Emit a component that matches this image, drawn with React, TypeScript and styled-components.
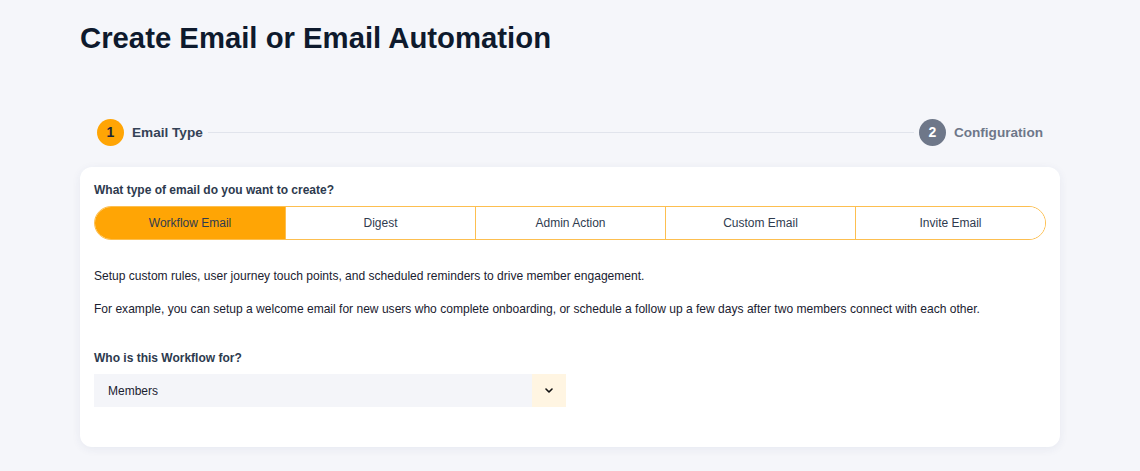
import React, { useState } from "react";
import styled, { createGlobalStyle } from "styled-components";

const GlobalStyle = createGlobalStyle`
  html, body { margin: 0; padding: 0; background: #f5f6fa; }
  body { font-family: "Liberation Sans", Arial, Helvetica, sans-serif; -webkit-font-smoothing: antialiased; }
  * { box-sizing: border-box; }
`;

const Page = styled.div`
  padding: 20px 80px 24px;
  width: 1140px;
`;

const Title = styled.h1`
  margin: 0;
  font-size: 29.3px;
  line-height: 36px;
  font-weight: 700;
  color: #0e1a2d;
`;

const Stepper = styled.div`
  display: flex;
  align-items: center;
  margin-top: 62px;
  padding: 0 17px;
  height: 28px;
`;

const Step = styled.div`
  display: flex;
  align-items: center;
  gap: 8px;
  flex-shrink: 0;
`;

const StepCircle = styled.div<{ $active?: boolean }>`
  width: 27px;
  height: 27px;
  border-radius: 50%;
  display: flex;
  align-items: center;
  justify-content: center;
  font-size: 14px;
  font-weight: 700;
  background: ${(p) => (p.$active ? "#ffa505" : "#6e7789")};
  color: ${(p) => (p.$active ? "#1d2535" : "#ffffff")};
`;

const StepLabel = styled.span<{ $active?: boolean }>`
  font-size: 13.6px;
  font-weight: 700;
  color: ${(p) => (p.$active ? "#344256" : "#6e7789")};
`;

const StepLine = styled.div`
  flex: 1;
  height: 1px;
  background: #e1e4ec;
  margin: 0 5px;
`;

const Card = styled.div`
  margin-top: 21px;
  background: #ffffff;
  border-radius: 12px;
  box-shadow: 0 2px 10px rgba(40, 55, 110, 0.07);
  padding: 15px 14px 40px;
`;

const FieldLabel = styled.div`
  font-size: 12px;
  line-height: 16px;
  font-weight: 700;
  color: #2d3a4e;
`;

const Segmented = styled.div`
  margin-top: 8px;
  display: grid;
  grid-template-columns: repeat(5, 1fr);
  height: 34px;
  border: 1.5px solid #fdbf50;
  border-radius: 999px;
  overflow: hidden;
`;

const Segment = styled.button<{ $selected?: boolean }>`
  border: none;
  border-left: 1.5px solid #fdbf50;
  &:first-child { border-left: none; }
  background: ${(p) => (p.$selected ? "#ffa505" : "#ffffff")};
  font-family: inherit;
  font-size: 12px;
  color: #2f3b4f;
  cursor: pointer;
  padding: 0;
`;

const Paragraph = styled.p<{ $first?: boolean }>`
  margin: ${(p) => (p.$first ? "26px 0 0" : "13px 0 0")};
  font-size: 12.05px;
  line-height: 20px;
  color: #1a2130;
`;

const SecondLabel = styled(FieldLabel)`
  margin-top: 31px;
`;

const Select = styled.div`
  margin-top: 8px;
  width: 472px;
  height: 33px;
  display: flex;
  background: #f4f5f9;
`;

const SelectValue = styled.div`
  flex: 1;
  display: flex;
  align-items: center;
  padding-left: 14px;
  font-size: 12px;
  color: #1a2130;
`;

const SelectArrow = styled.div`
  width: 34px;
  display: flex;
  align-items: center;
  justify-content: center;
  background: #fff5e2;
`;

const options = ["Workflow Email", "Digest", "Admin Action", "Custom Email", "Invite Email"];

export default function App() {
  const [selected, setSelected] = useState(0);
  return (
    <>
      <GlobalStyle />
      <Page>
        <Title>Create Email or Email Automation</Title>
        <Stepper>
          <Step>
            <StepCircle $active>1</StepCircle>
            <StepLabel $active>Email Type</StepLabel>
          </Step>
          <StepLine />
          <Step>
            <StepCircle>2</StepCircle>
            <StepLabel>Configuration</StepLabel>
          </Step>
        </Stepper>
        <Card>
          <FieldLabel>What type of email do you want to create?</FieldLabel>
          <Segmented>
            {options.map((o, i) => (
              <Segment key={o} $selected={i === selected} onClick={() => setSelected(i)}>
                {o}
              </Segment>
            ))}
          </Segmented>
          <Paragraph $first>
            Setup custom rules, user journey touch points, and scheduled reminders to drive member engagement.
          </Paragraph>
          <Paragraph>
            For example, you can setup a welcome email for new users who complete onboarding, or schedule a follow up a few days after two members connect with each other.
          </Paragraph>
          <SecondLabel>Who is this Workflow for?</SecondLabel>
          <Select>
            <SelectValue>Members</SelectValue>
            <SelectArrow>
              <svg width="8" height="5" viewBox="0 0 8 5" fill="none">
                <path d="M1 1L4 4L7 1" stroke="#111" strokeWidth="1.6" strokeLinecap="round" strokeLinejoin="round" />
              </svg>
            </SelectArrow>
          </Select>
        </Card>
      </Page>
    </>
  );
}
